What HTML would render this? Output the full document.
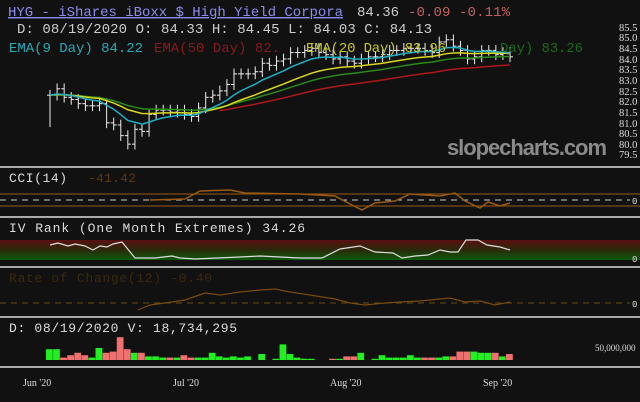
<!DOCTYPE html>
<html><head><meta charset="utf-8"><style>
body{margin:0;background:#111;width:640px;height:402px;overflow:hidden;font-family:"Liberation Mono",monospace}
svg{display:block}
</style></head><body>
<svg id="s" width="640" height="402" xmlns="http://www.w3.org/2000/svg" font-family="Liberation Mono, monospace">
<rect width="640" height="402" fill="#111"/>
<defs><linearGradient id="g" x1="0" y1="0" x2="0" y2="1"><stop offset="0" stop-color="#5a1010"/><stop offset="0.5" stop-color="#2a2a0a"/><stop offset="1" stop-color="#0c5a0c"/></linearGradient></defs>
<text x="447" y="155" font-family="Liberation Sans, sans-serif" font-weight="bold" font-size="22" fill="#8a8a8a" textLength="160">slopecharts.com</text>
<g font-size="10.5" fill="#ddd" font-family="Liberation Serif, serif">
<text x="619" y="31">85.5</text><text x="619" y="41">85.0</text><text x="619" y="52">84.5</text><text x="619" y="63">84.0</text><text x="619" y="73">83.5</text><text x="619" y="84">83.0</text><text x="619" y="95">82.5</text><text x="619" y="105">82.0</text><text x="619" y="116">81.5</text><text x="619" y="127">81.0</text><text x="619" y="137">80.5</text><text x="619" y="148">80.0</text><text x="619" y="158">79.5</text>
</g>
<g id="main"></g>
<text x="8" y="16" font-size="14" fill="#8c8cf0" text-decoration="underline" textLength="335">HYG - iShares iBoxx $ High Yield Corpora</text>
<text x="357" y="16" font-size="14" fill="#ccc" textLength="42">84.36</text>
<text x="408" y="16" font-size="14" fill="#c06060" textLength="102">-0.09 -0.11%</text>
<text x="17" y="33" font-size="14" fill="#ccc" textLength="415">D: 08/19/2020 O: 84.33 H: 84.45 L: 84.03 C: 84.13</text>
<text x="9" y="52" font-size="14" fill="#2aaab8" textLength="134">EMA(9 Day) 84.22</text>
<text x="154" y="52" font-size="14" fill="#8a1a1a">EMA(50 Day) 82.</text>
<text x="306" y="52" font-size="14" fill="#c8c820" textLength="140">EMA(20 Day) 83.96</text>
<text x="500" y="52" font-size="14" fill="#1a6a1a" textLength="83">Day) 83.26</text>
<g stroke="#aaa" stroke-width="2"><line x1="0" y1="167" x2="640" y2="167"/><line x1="0" y1="217" x2="640" y2="217"/><line x1="0" y1="267" x2="640" y2="267"/><line x1="0" y1="317" x2="640" y2="317"/><line x1="0" y1="367" x2="640" y2="367"/></g>
<text x="9" y="182" font-size="13" fill="#ddd" textLength="58">CCI(14)</text><text x="88" y="182" font-size="13" fill="#5a3a10" textLength="48">-41.42</text>
<line x1="0" y1="194" x2="640" y2="194" stroke="#9a5a10"/><line x1="0" y1="206" x2="640" y2="206" stroke="#9a5a10"/>
<line x1="0" y1="200" x2="630" y2="200" stroke="#ccc" stroke-dasharray="6,5"/>
<text x="632" y="204" font-size="9" fill="#ddd">0</text>
<polyline fill="none" stroke="#9a5a10" stroke-width="1.5" points="150,200 185,199 200,191 230,190 245,193 300,194 335,196 350,204 362,210 375,203 395,201 410,194 440,196 455,193 465,201 480,208 488,202 500,206 510,203"/>
<text x="9" y="232" font-size="13" fill="#ddd" textLength="296">IV Rank (One Month Extremes)  34.26</text>
<rect x="0" y="240" width="640" height="20" fill="url(#g)"/>
<text x="632" y="262" font-size="9" fill="#ddd">0</text>
<polyline fill="none" stroke="#ddd" stroke-width="1.2" points="50,245 58,243 68,246 75,244 85,246 93,250 100,246 107,247 113,244 122,242 135,258 155,258 172,256 180,258 195,259 240,257 260,256 280,257 300,258 322,258 340,249 360,246 375,252 393,253 402,258 415,256 428,255 440,250 450,252 458,252 466,240 478,240 487,245 500,247 510,250"/>
<text x="9" y="282" font-size="13" fill="#3a2a10" textLength="203">Rate of Change(12) -0.40</text>
<line x1="0" y1="303" x2="630" y2="303" stroke="#6a4a10" stroke-dasharray="6,5"/>
<text x="632" y="307" font-size="9" fill="#ddd">0</text>
<polyline fill="none" stroke="#7a4a10" stroke-width="1.2" points="138,310 150,305 165,303 185,300 205,293 220,295 240,292 260,290 275,289 290,292 310,295 335,299 350,303 365,305 385,303 400,302 420,301 440,299 450,298 465,302 480,301 495,305 510,302"/>
<text x="9" y="332" font-size="13" fill="#ddd" textLength="228">D: 08/19/2020 V: 18,734,295</text>
<text x="595" y="351" font-size="9" fill="#ddd" font-family="Liberation Serif, serif">50,000,000</text>
<g id="vol"></g>
<g font-size="10" fill="#ddd" font-family="Liberation Serif, serif"><text x="23" y="386">Jun '20</text><text x="173" y="386">Jul '20</text><text x="330" y="386">Aug '20</text><text x="483" y="386">Sep '20</text></g>
</svg>
<script>
var ns="http://www.w3.org/2000/svg";
function Y(p){return 27+(85.5-p)*21.3;}
var c=[82.3,82.6,82.2,82.1,81.9,81.8,81.8,81.9,81.0,80.9,80.4,80.0,80.7,80.6,81.4,81.6,81.6,81.5,81.6,81.4,81.3,81.7,82.2,82.3,82.5,82.8,83.3,83.3,83.3,83.4,83.8,83.7,83.9,84.0,84.3,84.3,84.4,84.5,84.3,84.2,84.0,84.1,83.9,83.8,84.0,84.1,84.1,84.2,84.4,84.4,84.5,84.5,84.5,84.4,84.3,84.8,84.9,84.6,84.4,84.0,84.1,84.4,84.4,84.2,84.3,84.1];
var g=document.getElementById('main'),h='';
var n=c.length,dx=(510-50)/(n-1);
for(var i=0;i<n;i++){var x=50+i*dx,o=i?c[i-1]:c[0],hi=Math.max(o,c[i])+0.25,lo=Math.min(o,c[i])-0.25;
if(i==0){lo=80.8;}
h+='<line x1="'+x+'" y1="'+Y(hi)+'" x2="'+x+'" y2="'+Y(lo)+'" stroke="#eee"/>';
h+='<line x1="'+(x-3)+'" y1="'+Y(o)+'" x2="'+x+'" y2="'+Y(o)+'" stroke="#eee"/>';
h+='<line x1="'+x+'" y1="'+Y(c[i])+'" x2="'+(x+3)+'" y2="'+Y(c[i])+'" stroke="#eee"/>';}
function ema(k,init){var a=2/(k+1),e=init,p='';for(var i=0;i<n;i++){e=i?e+a*(c[i]-e):init;p+=(50+i*dx)+','+Y(e)+' ';}return p;}
h+='<polyline fill="none" stroke="#b01818" stroke-width="1.5" points="'+ema(50,81.6).split(' ').slice(24).join(' ')+'"/>';
h+='<polyline fill="none" stroke="#2a8a1a" stroke-width="1.5" points="'+ema(30,82.3)+'"/>';
h+='<polyline fill="none" stroke="#d8d820" stroke-width="1.5" points="'+ema(20,82.3)+'"/>';
h+='<polyline fill="none" stroke="#20b0c8" stroke-width="1.5" points="'+ema(9,82.3)+'"/>';
g.innerHTML=h;
var v=[9,9,2,4,6,4,2,10,6,7,19,9,6,6,3,3,2,2,2,4,2,2,2,6,3,2,3,2,3,0,5,0,1,13,5,2,1,1,0,0,1,1,3,3,6,0,1,4,2,2,2,4,2,2,2,2,3,3,7,7,7,6,6,6,3,5];
var vv='';for(var i=0;i<v.length;i++){var x=46+i*dx,up=i==0||c[i]>=c[i-1];vv+='<rect x="'+x+'" y="'+(360-v[i]*1.2)+'" width="'+(dx-0.3)+'" height="'+(v[i]*1.2)+'" fill="'+(up?'#22ee22':'#f07070')+'"/>';}
document.getElementById('vol').innerHTML=vv;
</script>
</body></html>
